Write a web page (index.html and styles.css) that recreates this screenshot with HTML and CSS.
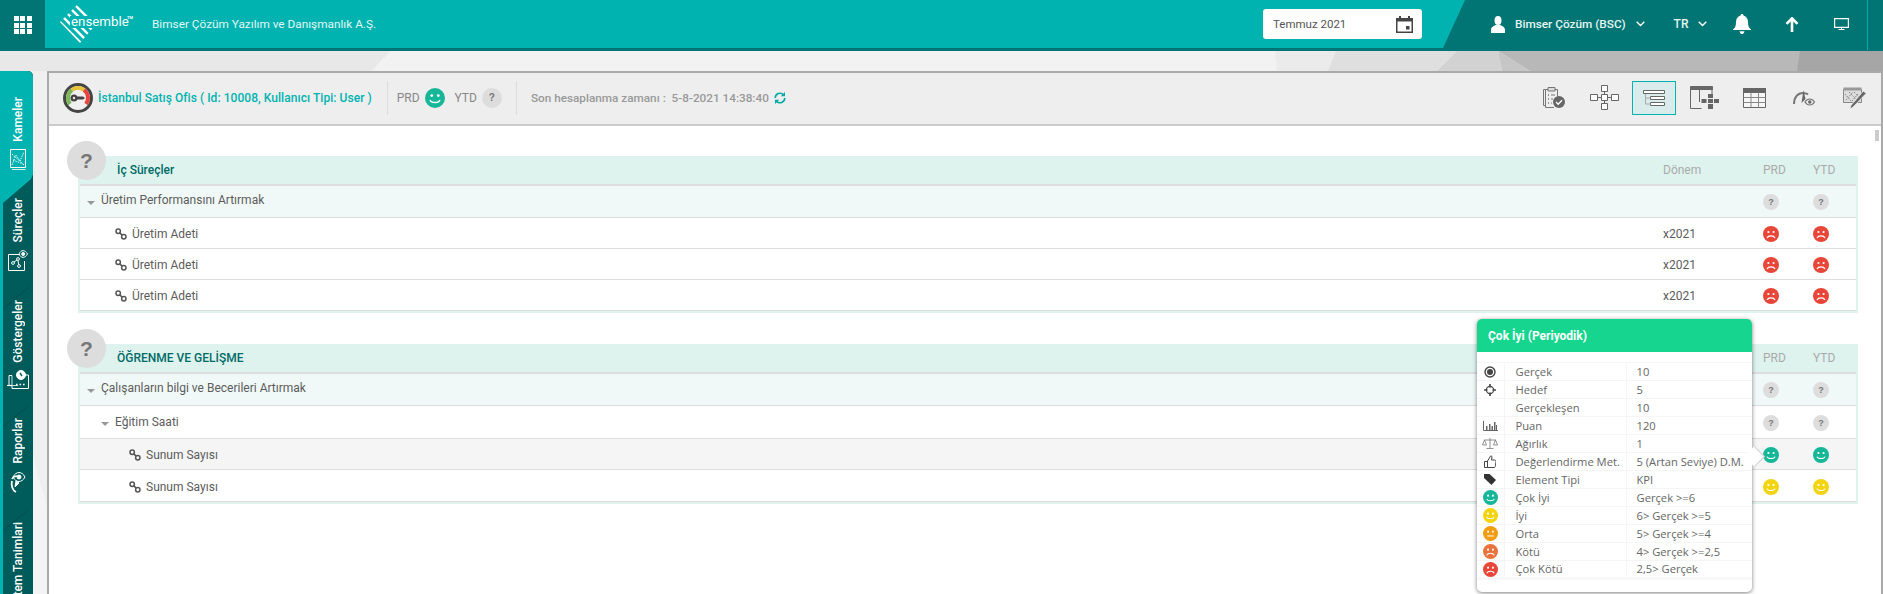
FILE: index.html
```html
<!DOCTYPE html>
<html lang="tr">
<head>
<meta charset="utf-8">
<title>Ensemble</title>
<link rel="stylesheet" href="styles.css">
</head>
<body>
<svg class="defs" width="0" height="0">
  <symbol id="smile" viewBox="0 0 16 16"><circle cx="8" cy="8" r="8" fill="currentColor"/><circle cx="5.4" cy="6" r="1.1" fill="#fff"/><circle cx="10.6" cy="6" r="1.1" fill="#fff"/><path d="M4 9.6c1 2.6 7 2.6 8 0" fill="none" stroke="#fff" stroke-width="1.1"/></symbol>
  <symbol id="neutral" viewBox="0 0 16 16"><circle cx="8" cy="8" r="8" fill="currentColor"/><circle cx="5.4" cy="6" r="1.1" fill="#fff"/><circle cx="10.6" cy="6" r="1.1" fill="#fff"/><path d="M4.5 10.6h7" fill="none" stroke="#fff" stroke-width="1.1"/></symbol>
  <symbol id="sad" viewBox="0 0 16 16"><circle cx="8" cy="8" r="8" fill="currentColor"/><circle cx="5.4" cy="6" r="1.1" fill="#fff"/><circle cx="10.6" cy="6" r="1.1" fill="#fff"/><path d="M4 12c1.2-2.8 6.800-2.800 8 0" fill="none" stroke="#fff" stroke-width="1.200"/></symbol>
  <symbol id="link" viewBox="0 0 12 12"><g fill="none" stroke="#555" stroke-width="1.500"><circle cx="3.200" cy="3.200" r="2.200"/><circle cx="8.800" cy="8.800" r="2.200"/><path d="M4.600 4.600l2.800 2.800"/></g></symbol>
</svg>

<svg class="backdrop" viewBox="0 0 1883 543" preserveAspectRatio="none" aria-hidden="true">
  <rect width="1883" height="543" fill="#efefef"/>
  <polygon points="0,0 390,0 372,20 0,20" fill="#e8e8e8"/>
  <polygon points="390,0 1275,0 1277,20 372,20" fill="#f2f2f2"/>
  <polygon points="1275,0 1336,0 1328,20 1277,20" fill="#ebebeb"/>
  <polygon points="1336,0 1457,0 1437,20 1328,20" fill="#dfdfdf"/>
  <polygon points="1457,0 1498,0 1502,20 1437,20" fill="#d2d2d2"/>
  <polygon points="1498,0 1800,0 1800,20 1530,20" fill="#b8b8b8"/>
  <polygon points="1498,0 1530,20 1502,20" fill="#c6c6c6"/>
  <polygon points="1800,0 1883,0 1883,20 1797,20" fill="#a6a6a6"/>
  <polygon points="33,405 47,456 47,543 33,543" fill="#f4f4f4"/>
</svg>

<header class="topbar">
  <button class="apps" aria-label="Uygulamalar">
    <span></span><span></span><span></span><span></span><span></span><span></span><span></span><span></span><span></span>
  </button>
  <div class="brandbar">
    <svg class="logo" viewBox="0 0 78 40" aria-label="ensemble">
      <defs><clipPath id="diamond"><polygon points="0,18 18,0 37,19 20,39"/></clipPath></defs>
      <g clip-path="url(#diamond)" stroke="#fff" stroke-width="2.400">
        <path d="M-4 6L30 40M0 2L34 36M4 -2L38 32M8 -6L42 28M12 -10L46 24M-8 10L26 44M16 -14L50 20"/>
      </g>
      <rect x="10" y="12" width="57" height="12" fill="#00b3b0"/>
      <text x="11" y="22" class="logo-word">ensemble</text>
      <text x="67" y="15" class="logo-tm">TM</text>
    </svg>
    <span class="company">Bimser Çözüm Yazılım ve Danışmanlık A.Ş.</span>
    <div class="datebox">
      <span>Temmuz 2021</span>
      <svg viewBox="0 0 17 17" width="17" height="17"><path d="M0 2h17v15H0z" fill="#444"/><path d="M3 0h2v3H3zM12 0h2v3h-2z" fill="#444"/><path d="M1.500 5.500h14v10h-14z" fill="#fff"/><path d="M10 10h3.500v3.500H10z" fill="#444"/></svg>
    </div>
  </div>
  <div class="userbar">
    <svg class="ic-user" viewBox="0 0 14 17" width="14" height="17"><ellipse cx="7" cy="4.500" rx="3.500" ry="4.500" fill="#fff"/><path d="M0 17v-3c0-3 3-4 4.500-5h5c1.500 1 4.500 2 4.500 5v3z" fill="#fff"/></svg>
    <span class="username">Bimser Çözüm (BSC)</span>
    <svg class="chev" viewBox="0 0 9 6" width="9" height="6"><path d="M.7.7L4.500 4.500 8.300.7" fill="none" stroke="#fff" stroke-width="1.400"/></svg>
    <span class="lang">TR</span>
    <svg class="chev" viewBox="0 0 9 6" width="9" height="6"><path d="M.7.7L4.500 4.500 8.300.7" fill="none" stroke="#fff" stroke-width="1.400"/></svg>
    <svg class="ic-bell" viewBox="0 0 18 20" width="18" height="20"><path d="M9 0c1 0 1.500.7 1.500 1.600C13.500 2.400 15 5 15 8c0 4 1 6 3 7.500V16H0v-.5C2 14 3 12 3 8c0-3 1.500-5.600 4.500-6.400C7.500.7 8 0 9 0z" fill="#fff"/><path d="M6.500 17.200h5C11 19.400 10 20 9 20s-2-.6-2.500-2.800z" fill="#fff"/></svg>
    <svg class="ic-up" viewBox="0 0 14 15" width="14" height="15"><path d="M7 1v14M1.500 6.800L7 1.300l5.500 5.500" fill="none" stroke="#fff" stroke-width="2.600"/></svg>
    <svg class="ic-mon" viewBox="0 0 15 12" width="15" height="12"><path d="M.6.600h13.800v8.800H.6z" fill="none" stroke="#fff" stroke-width="1.200"/><path d="M7.500 10v1.500M4.500 11.500h6" stroke="#fff"/></svg>
    <span class="rule"></span>
  </div>
</header>

<main class="workspace">
  <nav class="sidebar">
    <a class="tab tab-first"><span class="tab-text">Kameler</span>
      <svg viewBox="0 0 16 21" width="16" height="21"><g fill="none" stroke="#fff"><path d="M.5.500h15v18H.5z"/><path d="M2 20.500h13.500" stroke-width=".8"/><path d="M2 16L6 6l4 6 4-9M2 5l12 11M3 11l10 4" stroke-width=".9" stroke-dasharray="1.500 1"/></g></svg></a>
    <a class="tab"><span class="tab-text">Süreçler</span>
      <svg viewBox="0 0 20 22" width="20" height="22"><g fill="none" stroke="#fff"><path d="M.5 5.500h11M.5 5.500v16h16V12"/><circle cx="5" cy="14" r="1.400"/><circle cx="10" cy="10" r="1.400"/><circle cx="11" cy="17" r="1.400"/><path d="M6 13l3-2M10 11.500l.6 4"/><path d="M11 5c2-4.500 6-4.500 8.500 0-2.500 4.500-6.500 4.500-8.500 0z"/><circle cx="15.200" cy="5" r="1.500" fill="#fff"/></g></svg></a>
    <a class="tab tab-line"><span class="tab-text">Göstergeler</span>
      <svg viewBox="0 0 22 19" width="22" height="19"><g fill="none" stroke="#fff"><path d="M5 5.500H2v10h3v3h16.500V5H18"/><path d="M5 5.500v10h6" stroke-width=".8"/><circle cx="14" cy="5" r="4.500" fill="#fff"/><path d="M13 3l2 3" stroke="#005b5b" stroke-width="1.400"/><path d="M9 14.500h1.600M12.500 14.500h1.600M16 14.500h1.600" stroke-width="1.600"/><path d="M0 15.500h5" stroke-width="1.200"/></g></svg></a>
    <a class="tab tab-line"><span class="tab-text">Raporlar</span>
      <svg viewBox="0 0 16 23" width="16" height="23"><g fill="none" stroke="#fff"><path d="M6 22C2 20 1 15 2 11" stroke-width="1.800"/><path d="M2 9c1-2 3-3 5-3" stroke-width="1.400"/><path d="M9 13l-4 4 1-6z" fill="#fff"/><path d="M3 7c3-6 9-6 12 0-3 6-9 6-12 0z"/><circle cx="9" cy="7" r="2" fill="#fff"/></g></svg></a>
    <a class="tab tab-line"><span class="tab-text">Sistem Tanimlari</span></a>
  </nav>

  <section class="panel">
    <div class="panel-head">
      <svg class="gauge" viewBox="0 0 30 30" width="30" height="30">
        <circle cx="15" cy="15" r="13.500" fill="#f0f0f0" stroke="#444" stroke-width="3"/>
        <path d="M7 21A10 10 0 0 1 9 7" fill="none" stroke="#7cb75a" stroke-width="4"/>
        <path d="M9 7A10 10 0 0 1 21 7" fill="none" stroke="#e8c23a" stroke-width="4"/>
        <path d="M21 7A10 10 0 0 1 23 21" fill="none" stroke="#e8453c" stroke-width="4"/>
        <path d="M10 13.500h10l2 1.500-2 1.500H10z" fill="#444"/><circle cx="11" cy="15" r="3.500" fill="#444"/><circle cx="11" cy="15" r="1.200" fill="#eee"/>
      </svg>
      <span class="unit-title">İstanbul Satış Ofis ( Id: 10008, Kullanıcı Tipi: User )</span>
      <span class="vsep"></span>
      <span class="score-label">PRD</span>
      <svg class="score-face face-green" width="20" height="20"><use href="#smile"/></svg>
      <span class="score-label score-gap">YTD</span>
      <span class="qmark qmark-head">?</span>
      <span class="vsep vsep-b"></span>
      <span class="calc-time">Son hesaplanma zamanı :&nbsp; 5-8-2021 14:38:40</span>
      <svg class="refresh" viewBox="0 0 12 12" width="12" height="12"><g fill="none" stroke="#00a9a5" stroke-width="1.600"><path d="M1.200 6a4.800 4.800 0 0 1 8.300-3.200"/><path d="M10.800 6a4.800 4.800 0 0 1-8.300 3.200"/></g><path d="M11 0v4.200H6.800zM1 12V7.800h4.200z" fill="#00a9a5"/></svg>
      <div class="tools">
        <button class="tool" aria-label="Görev"><svg viewBox="0 0 22 23" width="22" height="23"><g fill="none" stroke="#777"><path d="M2.500 3.500H.5v16h2"/><path d="M2.500 3.500h12v7M11 21.500H2.500v-18"/><path d="M5 1.500h7v3.500H5z" fill="#ddd"/><path d="M5 9h1M5 13h1M5 17h1" stroke-width="1.600"/><path d="M8 9h4M8 13h2M8 17h1" stroke-width="1.200"/></g><circle cx="16" cy="16" r="6" fill="#666"/><path d="M13 16l2.200 2.200 3.800-4" fill="none" stroke="#fff" stroke-width="1.300"/></svg></button>
        <button class="tool" aria-label="Akış"><svg viewBox="0 0 29 25" width="29" height="25"><g fill="none" stroke="#666"><path d="M11.500.5h6v6h-6zM11.500 9.500h6v6h-6zM11.500 18.500h6v6h-6zM.5 9.500h7v6h-7zM21.500 9.500h7v6h-7z" fill="#fff"/><path d="M14.500 6.500v3M14.500 15.500v3M7.500 12.500h4M17.500 12.500h4"/></g></svg></button>
        <button class="tool tool-on" aria-label="Ağaç"><svg viewBox="0 0 22 16" width="22" height="16"><g stroke="#666" fill="#fff"><path d="M.5.500h21v3H.5zM7.500 6.500h14v3h-14zM7.500 12.500h14v3h-14z"/></g><path d="M2.500 4v10h5M2.500 8h5" fill="none" stroke="#aaa"/></svg></button>
        <button class="tool" aria-label="Hiyerarşi"><svg viewBox="0 0 29 24" width="29" height="24"><path d="M.5.500h22v3H.5z" fill="#666" stroke="#666"/><path d="M.5 3v19.500h11M9.500 3v13M22 3v5" fill="none" stroke="#666"/><path d="M18 8h5v4h-5zM18 13h5v4h-5zM18 18h5v5h-5zM11.500 13h5v4h-5zM24 13h5v4h-5z" fill="#666"/></svg></button>
        <button class="tool" aria-label="Tablo"><svg viewBox="0 0 23 20" width="23" height="20"><path d="M0 0h23v5H0z" fill="#666"/><path d="M.5 4.500h22v15H.5z" fill="#f6f6f6" stroke="#666"/><path d="M.5 9.500h22M.5 14.500h22M8 4.500v15M15.500 4.500v15" fill="none" stroke="#888"/></svg></button>
        <button class="tool" aria-label="Gösterge"><svg viewBox="0 0 22 16" width="22" height="16"><path d="M1 14C1 7 5 3 10 3c2 0 4 .6 5 1.500" fill="none" stroke="#777" stroke-width="2"/><path d="M8.500 13L10.500 0l2 9z" fill="#666"/><path d="M12 12c2.500-4 7-4 9.500 0-2.500 4-7 4-9.500 0z" fill="#eee" stroke="#777" stroke-width="1.200"/><circle cx="16.800" cy="12" r="1.700" fill="#666"/></svg></button>
        <button class="tool" aria-label="Düzenle"><svg viewBox="0 0 23 22" width="23" height="22"><path d="M.5 2.500h18v13H.5z" fill="#ddd" stroke="#888"/><path d="M.5.500h18v3H.5z" fill="#999"/><path d="M2 7l6 7M6 5l8 8M11 5l5 5M3 13l7-8M9 14l6-7" stroke="#888" stroke-dasharray="1.500 1" fill="none"/><path d="M20.500 4l2.500 2.500L10 20l-3 2 1-3.500z" fill="#666" stroke="#eee" stroke-width=".7"/></svg></button>
      </div>
    </div>

    <div class="panel-body">
      <div class="sec">
        <span class="badge">?</span>
        <div class="grid-row sec-head"><span class="sec-title">İç Süreçler</span><span class="col-label">Dönem</span><span class="col-label col-shift">PRD</span><span class="col-label col-shift">YTD</span></div>
        <div class="grid-row row row-group"><span class="name"><i class="caret"></i>Üretim Performansını Artırmak</span><span></span><span class="cell"><span class="qmark">?</span></span><span class="cell"><span class="qmark">?</span></span></div>
        <div class="grid-row row"><span class="name lvl-1"><svg class="link" width="12" height="12"><use href="#link"/></svg>Üretim Adeti</span><span class="term">x2021</span><span class="cell"><svg class="face face-red" width="16" height="16"><use href="#sad"/></svg></span><span class="cell"><svg class="face face-red" width="16" height="16"><use href="#sad"/></svg></span></div>
        <div class="grid-row row"><span class="name lvl-1"><svg class="link" width="12" height="12"><use href="#link"/></svg>Üretim Adeti</span><span class="term">x2021</span><span class="cell"><svg class="face face-red" width="16" height="16"><use href="#sad"/></svg></span><span class="cell"><svg class="face face-red" width="16" height="16"><use href="#sad"/></svg></span></div>
        <div class="grid-row row"><span class="name lvl-1"><svg class="link" width="12" height="12"><use href="#link"/></svg>Üretim Adeti</span><span class="term">x2021</span><span class="cell"><svg class="face face-red" width="16" height="16"><use href="#sad"/></svg></span><span class="cell"><svg class="face face-red" width="16" height="16"><use href="#sad"/></svg></span></div>
      </div>

      <div class="sec">
        <span class="badge">?</span>
        <div class="grid-row sec-head"><span class="sec-title">ÖĞRENME VE GELİŞME</span><span></span><span class="col-label col-shift">PRD</span><span class="col-label col-shift">YTD</span></div>
        <div class="grid-row row row-group"><span class="name"><i class="caret"></i>Çalışanların bilgi ve Becerileri Artırmak</span><span></span><span class="cell"><span class="qmark">?</span></span><span class="cell"><span class="qmark">?</span></span></div>
        <div class="grid-row row row-parent"><span class="name lvl-sub"><i class="caret"></i>Eğitim Saati</span><span></span><span class="cell"><span class="qmark">?</span></span><span class="cell"><span class="qmark">?</span></span></div>
        <div class="grid-row row row-hover"><span class="name lvl-2"><svg class="link" width="12" height="12"><use href="#link"/></svg>Sunum Sayısı</span><span></span><span class="cell"><svg class="face face-green" width="16" height="16"><use href="#smile"/></svg></span><span class="cell"><svg class="face face-green" width="16" height="16"><use href="#smile"/></svg></span></div>
        <div class="grid-row row row-tail"><span class="name lvl-2"><svg class="link" width="12" height="12"><use href="#link"/></svg>Sunum Sayısı</span><span></span><span class="cell"><svg class="face face-yellow" width="16" height="16"><use href="#smile"/></svg></span><span class="cell"><svg class="face face-yellow" width="16" height="16"><use href="#smile"/></svg></span></div>
      </div>
    </div>
    <span class="scroll-thumb"></span>
  </section>
</main>

<aside class="tip">
  <div class="tip-head">Çok İyi (Periyodik)</div>
  <table class="tip-table">
    <tr><td><svg viewBox="0 0 12 12" width="12" height="12"><circle cx="6" cy="6" r="5" fill="none" stroke="#444" stroke-width="1.400"/><circle cx="6" cy="6" r="3" fill="#444"/></svg></td><td>Gerçek</td><td>10</td></tr>
    <tr><td><svg viewBox="0 0 12 12" width="12" height="12"><circle cx="6" cy="6" r="3.600" fill="none" stroke="#444" stroke-width="1.200"/><path d="M6 0v3.500M6 8.500V12M0 6h3.500M8.500 6H12" stroke="#444" stroke-width="1.600"/></svg></td><td>Hedef</td><td>5</td></tr>
    <tr><td></td><td>Gerçekleşen</td><td>10</td></tr>
    <tr><td><svg viewBox="0 0 15 10" width="15" height="10"><path d="M.5 0v9.500H15" fill="none" stroke="#666"/><path d="M3 5h1.500v4H3zM6 3h1.500v6H6zM8.500 5H10v4H8.500zM11 1h1.500v8H11zM13 4h1v5h-1z" fill="#666"/></svg></td><td>Puan</td><td>120</td></tr>
    <tr><td><svg viewBox="0 0 16 11" width="16" height="11"><path d="M8 0v10M4.500 10.500h7M2 2h12M2.500 2L.5 7h4zM13.500 2l-2 5h4z" fill="none" stroke="#777" stroke-width=".8"/></svg></td><td>Ağırlık</td><td>1</td></tr>
    <tr><td><svg viewBox="0 0 12 13" width="12" height="13"><path d="M3.500 12.500h6.500c1 0 1.500-1 1.500-2l.5-4c0-1-.5-1.500-1.500-1.500H7.500l.5-3c0-1.500-2-1.500-2 0L3.500 6v6.500zM.5 6.500h3v6h-3z" fill="none" stroke="#444"/></svg></td><td>Değerlendirme Met.</td><td>5 (Artan Seviye) D.M.</td></tr>
    <tr><td><svg viewBox="0 0 12 11" width="12" height="11"><path d="M0 0h5.500L12 6l-4.500 5L0 4z" fill="#333"/></svg></td><td>Element Tipi</td><td>KPI</td></tr>
    <tr><td><svg class="face-green" width="15" height="15"><use href="#smile"/></svg></td><td>Çok İyi</td><td>Gerçek &gt;=6</td></tr>
    <tr><td><svg class="face-yellow" width="15" height="15"><use href="#smile"/></svg></td><td>İyi</td><td>6&gt; Gerçek &gt;=5</td></tr>
    <tr><td><svg class="face-orange" width="15" height="15"><use href="#neutral"/></svg></td><td>Orta</td><td>5&gt; Gerçek &gt;=4</td></tr>
    <tr><td><svg class="face-coral" width="15" height="15"><use href="#sad"/></svg></td><td>Kötü</td><td>4&gt; Gerçek &gt;=2,5</td></tr>
    <tr><td><svg class="face-red" width="15" height="15"><use href="#sad"/></svg></td><td>Çok Kötü</td><td>2,5&gt; Gerçek</td></tr>
  </table>
  <span class="tip-arrow"></span>
</aside>
</body>
</html>
```
FILE: styles.css
```css
* { box-sizing: border-box; }
html, body { margin: 0; height: 594px; overflow: hidden; }
body {
  position: relative;
  width: 1883px;
  font-family: Roboto, "Liberation Sans", sans-serif;
  font-size: 12px;
  color: #5c5c5c;
  background: #efefef;
  display: flex;
  flex-direction: column;
}
.defs { position: absolute; }
.backdrop { position: absolute; left: 0; top: 51px; width: 1883px; height: 543px; }
button { border: 0; background: none; padding: 0; margin: 0; }

/* top bar */
.topbar { position: relative; display: flex; height: 51px; flex: none; background: #007573; color: #fff; }
.apps { width: 45px; height: 51px; display: grid; grid-template-columns: repeat(3, 5px); grid-auto-rows: 5px; gap: 1.500px; justify-content: center; align-content: center; padding-bottom: 1px; }
.apps span { background: #fff; }
.brandbar {
  width: 1420px; height: 48px; background: #00b3b0; display: flex; align-items: center;
  clip-path: polygon(0 0, 100% 0, calc(100% - 22px) 100%, 0 100%);
  padding-left: 15px;
}
.logo { width: 78px; height: 40px; flex: none; }
.logo-word { font-size: 13.300px; fill: #fff; font-family: Roboto, sans-serif; }
.logo-tm { font-size: 4px; fill: #fff; font-weight: 700; }
.company { margin-left: 14px; color: #e2f7f6; font-size: 11.800px; }
.datebox {
  margin-left: auto; margin-right: 43px; width: 159px; height: 30px; background: #fff; border-radius: 3px;
  display: flex; align-items: center; justify-content: space-between; padding: 0 9px 0 10px; color: #555; font-size: 11.500px;
}
.userbar { flex: 1; display: flex; align-items: center; height: 48px; padding-left: 26px; position: relative; }
.username { margin-left: 10px; font-weight: 500; color: #e8f6f5; font-size: 11.800px; }
.chev { margin-left: 10px; }
.lang { margin-left: 29px; font-weight: 500; color: #e8f6f5; }
.ic-bell { margin-left: 26px; }
.ic-up { margin-left: 34px; }
.ic-mon { margin-left: 35px; }
.rule { position: absolute; right: 15px; top: 0; width: 1px; height: 50px; background: #00a9a5; }

/* workspace */
.workspace { position: relative; flex: 1; display: flex; min-height: 0; padding-top: 20px; }
.sidebar {
  position: relative; width: 33px; flex: none; background: #005b5b; border-left: 3px solid #00b3b0;
  border-top-right-radius: 5px; display: flex; flex-direction: column;
}
.sidebar::before {
  content: ""; position: absolute; left: -3px; top: 0; width: 33px; height: 132px; background: #00b3b0;
  clip-path: polygon(0 0, 28px 0, 31px 1px, 33px 5px, 33px 103px, 31px 108px, 3px 132px, 0 132px);
}
.tab { position: relative; display: flex; flex-direction: column; align-items: center; gap: 7px; padding: 15px 0 14px; color: #fff; flex: none; }
.tab-first { padding: 26px 0 13px; }
.tab-text { writing-mode: vertical-rl; transform: rotate(180deg); font-weight: 500; font-size: 12px; line-height: 14px; color: #fff; white-space: nowrap; }
.tab svg { flex: none; }
.tab-line::before {
  content: ""; position: absolute; left: 0; top: 2px; width: 26px; height: 22px;
  background: linear-gradient(to top left, transparent calc(50% - 1px), #004f4f 50%, transparent calc(50% + 1px));
}

/* panel */
.panel { position: relative; flex: none; width: 1836px; margin-left: 14px; background: #fff; border: solid #aaa; border-width: 2px 2px 0 2px; }
.panel-head { height: 53px; background: #eee; border-bottom: 2px solid #ccc; display: flex; align-items: center; padding: 0 5px 2px 14px; }
.gauge { flex: none; }
.unit-title { margin-left: 5px; color: #00b3b0; font-weight: 500; font-size: 12px; letter-spacing: .05px; white-space: nowrap; }
.vsep { width: 1px; height: 34px; background: #ddd; margin: 0 9px 0 15px; }
.vsep-b { margin: 0 14px 0 14px; }
.score-label { color: #888; }
.score-gap { margin-left: 10px; }
.score-face { margin-left: 5px; }
.qmark {
  width: 16px; height: 16px; border-radius: 50%; background: #ddd; color: #777; font-weight: 700; font-size: 9px;
  display: inline-flex; align-items: center; justify-content: center; font-family: "Liberation Sans", sans-serif;
}
.qmark-head { width: 20px; height: 20px; margin-left: 5px; font-size: 10px; }
.calc-time { color: #999; font-weight: 500; font-size: 11.750px; white-space: nowrap; }
.refresh { margin-left: 5px; }
.tools { margin-left: auto; display: flex; gap: 6px; }
.tool { width: 44px; height: 34px; display: flex; align-items: center; justify-content: center; border: 1px solid transparent; }
.tool-on { background: #d9ebea; border-color: #00b3b0; }
.panel-body { padding: 30px 23px 0 29px; }
.scroll-thumb { position: absolute; right: 2px; top: 57px; width: 4px; height: 11px; background: #ccc; }

/* scorecard sections */
.sec { position: relative; border: solid #def3ee; border-width: 0 2px 2px; margin-bottom: 31px; }
.badge {
  position: absolute; left: -13px; top: -15px; width: 39px; height: 39px; border-radius: 50%; background: #ddd; color: #777;
  display: flex; align-items: center; justify-content: center; font: 700 21px "Liberation Sans", sans-serif;
}
.grid-row { display: grid; grid-template-columns: 1583px 83px 50px 50px; align-items: center; }
.sec-head { height: 30px; background: #def3ee; border-bottom: 2px solid #ddd; margin: 0; }
.sec-title { padding-left: 37px; font-weight: 500; color: #006b66; }
.col-label { color: #aaa; }
.col-shift { padding-left: 17px; }
.row { height: 31px; border-bottom: 1px solid #ddd; padding-top: 2px; }
.row-group { height: 32px; background: #f0f9f7; padding-top: 0; }
.row-parent { height: 33px; }
.row-hover { background: #f5f5f5; }
.row-tail { height: 32px; }
.name { display: flex; align-items: center; padding-left: 7px; white-space: nowrap; }
.row-group .name, .row-parent .name { padding-bottom: 3px; }
.lvl-1 { padding-left: 35px; }
.lvl-sub { padding-left: 21px; }
.lvl-2 { padding-left: 49px; }
.caret { width: 0; height: 0; border: 4px solid transparent; border-top: 4px solid #999; border-bottom: 0; margin-right: 6px; margin-top: 5px; }
.link { margin-right: 5px; }
.cell { display: flex; align-items: center; justify-content: center; }
.face { display: block; }
.face-green { color: #16b798; }
.face-yellow { color: #f2d411; }
.face-orange { color: #f39c12; }
.face-coral { color: #ea733d; }
.face-red { color: #e84639; }

/* tooltip */
.tip {
  position: absolute; left: 1477px; top: 319px; width: 275px; height: 273px; background: #fff; border-radius: 5px;
  box-shadow: 0 1px 4px rgba(0, 0, 0, .5); z-index: 5;
}
.tip-head { height: 33px; background: #15d58f; color: #fff; font-weight: 700; font-size: 12px; line-height: 34px; padding-left: 11px; border-radius: 5px 5px 0 0; }
.tip-table { width: 100%; margin-top: 10px; border-collapse: collapse; table-layout: fixed; font: 11.200px/16px "Open Sans", sans-serif; color: #666; border-bottom: 3px solid #f8f8f8; }
.tip-table tr { height: 18px; border-top: 1px solid #f5f5f5; }
.tip-table td { padding: 0; white-space: nowrap; }
.tip-table td:first-child { width: 27px; text-align: center; border-right: 1px solid #f5f5f5; }
.tip-table td:first-child svg { display: block; margin: auto; }
.tip-table td:nth-child(2) { width: 122px; padding-left: 11px; border-right: 1px solid #f5f5f5; }
.tip-table td:nth-child(3) { padding-left: 10px; }
.tip-arrow {
  position: absolute; left: 270px; top: 130px; width: 15px; height: 15px; background: #fff; transform: rotate(45deg);
  border: solid #ccc; border-width: 1px 1px 0 0;
}
```
